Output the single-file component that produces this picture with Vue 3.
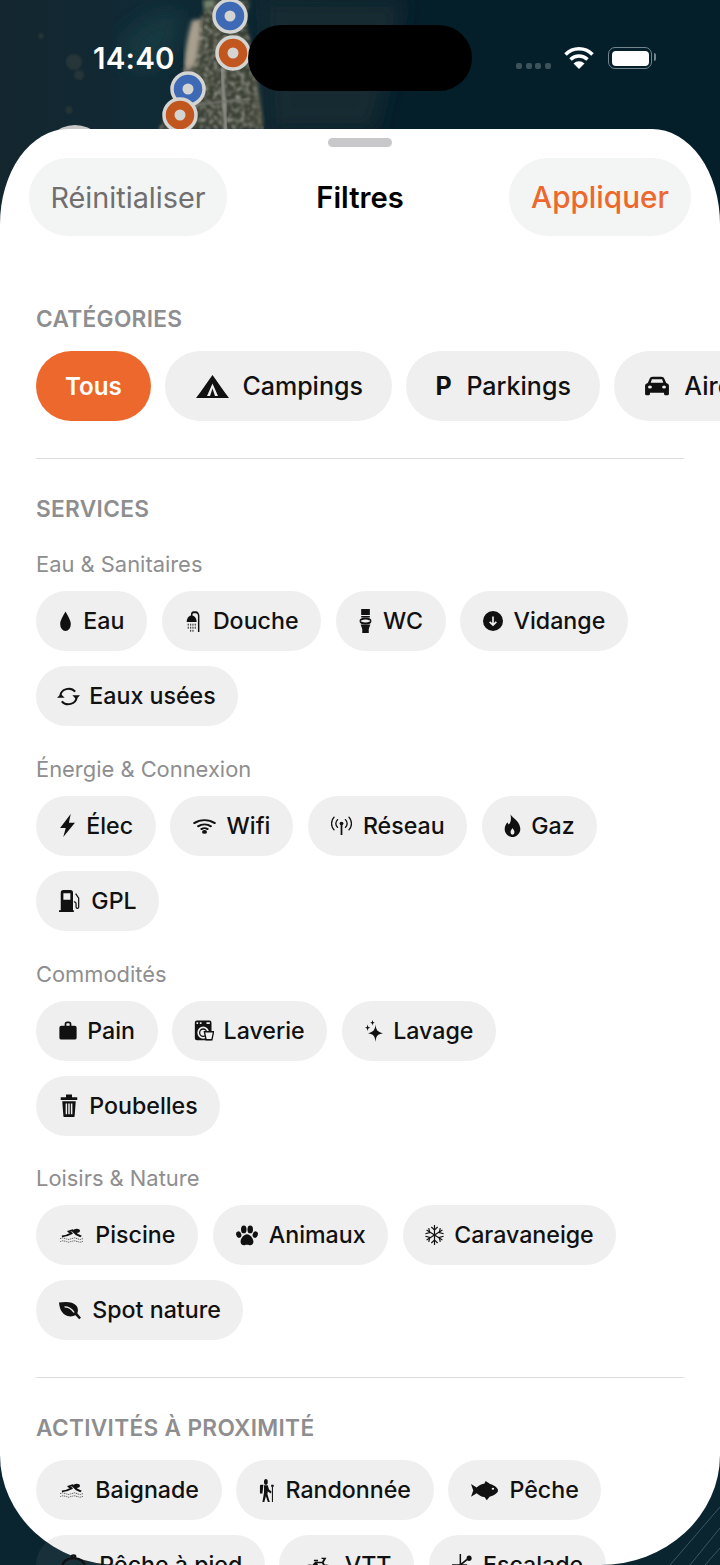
<script setup>
const I = {
  drop: '<path d="M12 1C12 1 3.500 10.500 3.500 15.500a8.500 8.500 0 0 0 17 0C20.500 10.500 12 1 12 1z" fill="currentColor"/>',
  shower: '<path d="M10 7V4.500a3 3 0 0 1 3-3h3.500a4 4 0 0 1 4 4V24" fill="none" stroke="currentColor" stroke-width="2.200"/><path d="M10 5c-4 0-7.500 3-7.500 7.500h15C17.500 8 14 5 10 5z" fill="currentColor"/><g fill="currentColor" opacity=".75"><rect x="4" y="14.500" width="1.800" height="2.200"/><rect x="7.500" y="14.500" width="1.800" height="2.200"/><rect x="11" y="14.500" width="1.800" height="2.200"/><rect x="14.500" y="14.500" width="1.800" height="2.200"/><rect x="4" y="18" width="1.800" height="2.200"/><rect x="7.500" y="18" width="1.800" height="2.200"/><rect x="11" y="18" width="1.800" height="2.200"/><rect x="14.500" y="18" width="1.800" height="2.200"/><rect x="7.500" y="21.500" width="1.800" height="2.200"/><rect x="11" y="21.500" width="1.800" height="2.200"/></g>',
  wc: '<rect x="4" y="0" width="16" height="6" fill="currentColor"/><rect x="4" y="7" width="16" height="1.500" fill="currentColor"/><ellipse cx="12" cy="12" rx="10" ry="2.600" fill="none" stroke="currentColor" stroke-width="2"/><path d="M3 15.500h18l-3 4.500v4H6v-4z" fill="currentColor"/>',
  down: '<circle cx="12" cy="12" r="12" fill="currentColor"/><path d="M12 6.500v10M8 13l4 4 4-4" fill="none" stroke="#efefef" stroke-width="2"/>',
  sync: '<path d="M3.500 11a8.700 8.700 0 0 1 15.500-4.500M20.500 13a8.700 8.700 0 0 1-15.500 4.500" fill="none" stroke="currentColor" stroke-width="2.100"/><path d="M24 10.500h-8l4 4.500zM0 13.500h8L4 9z" fill="currentColor"/>',
  bolt: '<path d="M16.500 0L1.500 14.500h8L6 24 22.500 9H14z" fill="currentColor"/>',
  wifi: '<path d="M1.500 8.500a15.500 15.500 0 0 1 21 0M5.500 13a9.700 9.700 0 0 1 13 0M9 17a4.500 4.500 0 0 1 6 0" fill="none" stroke="currentColor" stroke-width="2.600" stroke-linecap="round"/><circle cx="12" cy="21" r="2.600" fill="currentColor"/>',
  antenna: '<g fill="none" stroke="currentColor" stroke-width="1.500" stroke-linecap="round"><path d="M7.500 4.500a8 8 0 0 0 0 10M3.500 1.500a12.500 12.500 0 0 0 0 16M16.500 4.500a8 8 0 0 1 0 10M20.500 1.500a12.500 12.500 0 0 1 0 16"/><path d="M12 10v14" stroke-width="2"/></g><circle cx="12" cy="9.500" r="2.200" fill="currentColor"/>',
  flame: '<path fill-rule="evenodd" d="M9 0c.5 3 13 6.500 14 15 .5 5-5.500 9-11 9S.5 20.500 1 15c.2-2.500 1.700-4.500 3.800-6.500l1.700 2.500C10 9 10.500 4 9 0zM12 14.500c-1 1.500-2.800 2.500-2.800 4.300a2.800 2.800 0 0 0 5.600 0c0-1.800-1.800-2.800-2.800-4.300z" fill="currentColor"/>',
  fuel: '<path fill-rule="evenodd" d="M2 22V3A3 3 0 0 1 5 0h8a3 3 0 0 1 3 3v19h1v2H0v-2zM5 3.500V10.500h8V3.500z" fill="currentColor"/><path d="M19 4l3.500 5v9.500a1.500 1.500 0 0 1-3 0V15a2 2 0 0 0-2.500-2" fill="none" stroke="currentColor" stroke-width="1.400"/>',
  bag: '<path fill-rule="evenodd" d="M7.500 6V4A3.500 3.500 0 0 1 11 .5h2A3.500 3.500 0 0 1 16.500 4v2H21a2.500 2.500 0 0 1 2.500 2.500V21a2.500 2.500 0 0 1-2.500 2.500H3A2.500 2.500 0 0 1 .5 21V8.500A2.500 2.500 0 0 1 3 6zm2.300 0h4.400V4c0-.7-.5-1.300-1.200-1.300h-2c-.7 0-1.200.6-1.200 1.300z" fill="currentColor"/>',
  washer: '<path fill-rule="evenodd" d="M1 3A2.500 2.500 0 0 1 3.500.5h15A2.500 2.500 0 0 1 21 3v20H3.500A2.500 2.500 0 0 1 1 20.500zM3 2.500h2v2H3zm4 0h2v2H7zm8 0h4v2h-4zM11 7.500a7 7 0 1 0 0 14 7 7 0 0 0 0-14z" fill="currentColor"/><circle cx="11" cy="14.500" r="4.200" fill="none" stroke="currentColor" stroke-width="1.500"/><path d="M12.500 13.500h11l-2 9h-7z" fill="#efefef" stroke="currentColor" stroke-width="1.600"/>',
  sparkle: '<path d="M14 5c.8 6 2.500 8 10 9.500-7.500 1-9.200 3-10 9.500-.8-6.500-2.500-8.500-10-9.500 7.500-1.500 9.200-3.500 10-9.500z" fill="currentColor"/><path d="M10 0l.8 2.200 2.200.8-2.200.8L10 6l-.8-2.200L7 3l2.200-.8zM3.500 5l.9 2.600L7 8.500l-2.600.9L3.500 12l-.9-2.600L0 8.500l2.600-.9z" fill="currentColor"/>',
  trash: '<path fill-rule="evenodd" d="M8 3.500V.5h8v3h7v2.700H1V3.500zM3 7.500h18L19.500 23c0 .5-.5 1-1 1h-13c-.5 0-1-.5-1-1zM7.500 10v11h2v-11zm3.500 0v11h2v-11zm3.500 0v11h2v-11z" fill="currentColor"/>',
  swim: '<circle cx="17.500" cy="4.500" r="3.300" fill="currentColor"/><path d="M2 13.500C6 13 9 11 12 8.500L9 5.500 13 3.500 17.500 10.500 22 13.500" fill="none" stroke="currentColor" stroke-width="2.800" stroke-linejoin="round"/><path d="M0 17c2-1.500 4-1.500 6 0s4 1.500 6 0 4-1.500 6 0 4 1.500 6 0M0 21.500c2-1.300 4-1.300 6 0s4 1.300 6 0 4-1.300 6 0 4 1.300 6 0" fill="none" stroke="currentColor" stroke-width="1.200" stroke-dasharray="1.500 .7" opacity=".75"/>',
  paw: '<ellipse cx="8.500" cy="5" rx="3" ry="4.500" fill="currentColor"/><ellipse cx="15.500" cy="5" rx="3" ry="4.500" fill="currentColor"/><ellipse cx="3" cy="11" rx="2.800" ry="3.800" fill="currentColor" transform="rotate(-15 3 11)"/><ellipse cx="21" cy="11" rx="2.800" ry="3.800" fill="currentColor" transform="rotate(15 21 11)"/><path d="M12 10.500c3.500 0 6.500 4.500 7 8 .4 3-2 5-4.500 4.500-1.500-.4-3.500-.4-5 0C7 23.500 4.600 21.500 5 18.500c.5-3.500 3.500-8 7-8z" fill="currentColor"/>',
  snow: '<g fill="none" stroke="currentColor" stroke-width="1.500"><path d="M12 0v24M2 6l20 12M22 6L2 18"/><path d="M8 2.500L12 6l4-3.500M8 21.500L12 18l4 3.500M.5 10.500L6 9 4.700 3.800M23.500 10.500L18 9l1.300-5.200M.5 13.500L6 15l-1.300 5.200M23.500 13.500L18 15l1.300 5.200"/></g>',
  leaf: '<path d="M0 2c7-1.500 15-1.500 19 4 2 2.800 2 6.500 1 9.500L24 21l-2 2-4-5c-3.500 2-8 2-11.500-.5C2 14 .5 8 0 2z" fill="currentColor"/><path d="M6 7.500c3.500 0 7.500 2 10.500 7" fill="none" stroke="#efefef" stroke-width="1.600"/>',
  hike: '<circle cx="11" cy="3" r="3" fill="currentColor"/><path d="M1.500 7.500a1.500 1.500 0 0 1 1.500-1.500h4l-1.500 9H1.500z" fill="currentColor"/><path d="M8 6.500h6l2 4.500 4 2-1 2-5-2-.5 3 4 8.500h-3l-3.500-6.500L8.500 24h-3L8 14z" fill="currentColor"/><path d="M21.500 8v16" stroke="currentColor" stroke-width="1.700"/><rect x="19.500" y="6" width="4" height="2.200" fill="currentColor"/>',
  fish: '<path d="M0 4.500L5 8.500C7 6 10 4.500 12 4L13 1l4 3.500C21 6 24 9 24 12c0 3-4 6-7.500 7L14 23l-2-3.500c-3-.5-5-2.500-7-4.500l-5 4L2 12z" fill="currentColor"/><circle cx="19.500" cy="10" r="1.100" fill="#efefef"/>',
  basket: '<path d="M12 1.500a1.500 1.500 0 1 1 0 3 1.500 1.500 0 0 1 0-3zM2 14c0-5 4-9.500 10-9.500S22 9 22 14l1.500 9h-23z" fill="none" stroke="currentColor" stroke-width="2.200"/>',
  bike: '<g fill="none" stroke="currentColor" stroke-width="1.700"><circle cx="5" cy="17" r="4.700"/><circle cx="19" cy="17" r="4.700"/><path d="M5 17l5-8h6l3 8M10 9l3 8H5M8.500 6.500H12M15 4h3l-2 5"/></g>',
  climb: '<path d="M10 0v24M0 12h18M10 12l8-6M18 12l4 10" fill="none" stroke="currentColor" stroke-width="1.800"/><circle cx="20.500" cy="4.500" r="3" fill="currentColor"/>',
  tent: '<path fill-rule="evenodd" d="M16.500 0l2.500 3.500L28.500 17l4.500 6H0l4.500-6L14 3.500zM16.500 8.500L11 21h11zM16.500 13.500L19 21h-5z" fill="currentColor"/>',
  car: '<path fill-rule="evenodd" d="M5 4C5.400 2 6.600 1 8 1h8c1.400 0 2.600 1 3 3l1.500 4.500c1.500.5 2.500 1.700 2.500 3.300V22a1 1 0 0 1-1 1h-2.500a1 1 0 0 1-1-1v-2h-13v2a1 1 0 0 1-1 1H2a1 1 0 0 1-1-1V11.800C1 10.200 2 9 3.500 8.500zM7.300 4L6.200 8.200h11.600L16.700 4zM5.500 11.500a1.800 1.800 0 1 0 0 3.600 1.800 1.800 0 0 0 0-3.600zm13 0a1.800 1.800 0 1 0 0 3.600 1.800 1.800 0 0 0 0-3.600z" fill="currentColor"/>'
}

const groups = [
  { title: 'Eau & Sanitaires', chips: [
    { t: 'Eau', i: 'drop', w: 17, iw: 15, ih: 20 },
    { t: 'Douche', i: 'shower', w: 21, iw: 16, ih: 21 },
    { t: 'WC', i: 'wc', w: 17, iw: 13, ih: 24 },
    { t: 'Vidange', i: 'down', w: 23, iw: 20, ih: 20 },
    { t: 'Eaux usées', i: 'sync', w: 23, iw: 24, ih: 21 }
  ] },
  { title: 'Énergie & Connexion', chips: [
    { t: 'Élec', i: 'bolt', w: 20, iw: 17, ih: 23 },
    { t: 'Wifi', i: 'wifi', w: 26, iw: 23, ih: 17 },
    { t: 'Réseau', i: 'antenna', w: 25, iw: 21, ih: 19 },
    { t: 'Gaz', i: 'flame', w: 19, iw: 17, ih: 23 },
    { t: 'GPL', i: 'fuel', w: 25, iw: 21, ih: 22 }
  ] },
  { title: 'Commodités', chips: [
    { t: 'Pain', i: 'bag', w: 21, iw: 18, ih: 19 },
    { t: 'Laverie', i: 'washer', w: 21, iw: 20, ih: 21 },
    { t: 'Lavage', i: 'sparkle', w: 21, iw: 18, ih: 22 },
    { t: 'Poubelles', i: 'trash', w: 23, iw: 18, ih: 23 }
  ] },
  { title: 'Loisirs & Nature', chips: [
    { t: 'Piscine', i: 'swim', w: 29, iw: 23, ih: 15 },
    { t: 'Animaux', i: 'paw', w: 26, iw: 22, ih: 21 },
    { t: 'Caravaneige', i: 'snow', w: 21, iw: 19, ih: 20 },
    { t: 'Spot nature', i: 'leaf', w: 26, iw: 22, ih: 19 }
  ] }
]

const activities = [
  { t: 'Baignade', i: 'swim', w: 29, iw: 23, ih: 15 },
  { t: 'Randonnée', i: 'hike', w: 19, iw: 15, ih: 23 },
  { t: 'Pêche', i: 'fish', w: 31, iw: 27, ih: 21 },
  { t: 'Pêche à pied', i: 'basket', w: 33, iw: 27, ih: 22 },
  { t: 'VTT', i: 'bike', w: 35, iw: 28, ih: 20 },
  { t: 'Escalade', i: 'climb', w: 24, iw: 20, ih: 22 }
]
</script>

<template>
  <div class="phone">
    <svg class="map" width="720" height="240" viewBox="0 0 720 240">
      <defs>
        <filter id="b2"><feGaussianBlur stdDeviation="2" /></filter>
        <filter id="b1"><feGaussianBlur stdDeviation="1" /></filter>
        <filter id="b8"><feGaussianBlur stdDeviation="10" /></filter>
        <filter id="noise" x="0" y="0" width="100%" height="100%">
          <feTurbulence type="fractalNoise" baseFrequency=".22" numOctaves="2" seed="4" />
          <feColorMatrix values="0 0 0 0 .5  0 0 0 0 .49  0 0 0 0 .42  1.800 0 0 0 -.75" />
          <feComposite in2="SourceAlpha" operator="in" />
          <feGaussianBlur stdDeviation=".8" />
        </filter>
        <linearGradient id="sea" x1="0" x2="1" y1="0" y2="0">
          <stop offset="0" stop-color="#14262e" />
          <stop offset=".2" stop-color="#102a36" />
          <stop offset=".56" stop-color="#041e2a" />
          <stop offset="1" stop-color="#051f2a" />
        </linearGradient>
      </defs>
      <rect width="720" height="240" fill="url(#sea)" />
      <path d="M262 0H405L375 130H270z" fill="#162a31" filter="url(#b8)" />
      <path d="M120 40c30-30 50-30 60-30 10 30-20 70-50 60z" fill="#173740" filter="url(#b8)" />
      <g fill="#273537" filter="url(#b1)">
        <circle cx="41" cy="36" r="3" /><circle cx="74" cy="62" r="8" /><circle cx="79" cy="75" r="5" />
        <circle cx="69" cy="110" r="3.500" />
      </g>
      <path d="M212 0h38l-4 20 6 30 4 35 8 45h-106l14-25 8-20 7-30 8-30z" fill="#3a3f36" filter="url(#b2)" />
      <path d="M212 0h38l-4 20 6 30 4 35 8 45h-106l14-25 8-20 7-30 8-30z" filter="url(#noise)" />
      <path d="M192 20c-4 15-8 30-7 50l10-4c4-18 6-32 6-46z" fill="#a89f8e" filter="url(#b2)" />
      <path d="M203 0h14l-12 12z" fill="#7c8a70" filter="url(#b2)" />
      <path d="M252 70l6 55h5l-5-50z" fill="#6f6a59" opacity=".6" filter="url(#b2)" />
      <path d="M222 68l4 66" fill="none" stroke="#8d8d88" stroke-width="3.500" filter="url(#b1)" />
      <path d="M196 105l24-3 30-3" fill="none" stroke="#77776f" stroke-width="2.200" filter="url(#b1)" />
      <circle cx="75" cy="158" r="33" fill="#c7c7c5" />
      <g stroke="#d4d4d2" stroke-width="3.500">
        <circle cx="230" cy="16" r="16" fill="#3e69b5" />
        <circle cx="233" cy="53" r="16" fill="#c2561f" />
        <circle cx="188" cy="89" r="16" fill="#3e69b5" />
        <circle cx="180" cy="115" r="16" fill="#c2561f" />
      </g>
      <g fill="#d4d4d2">
        <circle cx="230" cy="16" r="5.500" /><circle cx="233" cy="53" r="5.500" />
        <circle cx="188" cy="89" r="5.500" /><circle cx="180" cy="115" r="5.500" />
      </g>
    </svg>

    <div class="corner">
      <svg width="720" height="125" viewBox="0 0 720 125" fill="none" stroke="#3a5666" stroke-width="1">
        <path d="M670 125L720 67M690 125L720 88M705 125L720 108" />
      </svg>
    </div>

    <header class="status">
      <span class="time">14:40</span>
      <div class="island"></div>
      <div class="status-right">
        <span class="dots"><i></i><i></i><i></i><i></i></span>
        <svg width="30" height="22" viewBox="0 0 30 22">
          <path d="M1.500 7.500a19 19 0 0 1 27 0M6.500 12.500a12 12 0 0 1 17 0" fill="none" stroke="#fff" stroke-width="3.500" />
          <path d="M15 22l-5.500-5.500a8 8 0 0 1 11 0z" fill="#fff" />
        </svg>
        <span class="battery"><b></b></span>
      </div>
    </header>

    <main class="sheet">
      <div class="handle"></div>
      <div class="topbar">
        <button class="tb reset">Réinitialiser</button>
        <h1>Filtres</h1>
        <button class="tb apply">Appliquer</button>
      </div>

      <section class="block cats">
        <h2>CATÉGORIES</h2>
        <div class="cat-row">
          <span class="cat active">Tous</span>
          <span class="cat"><svg class="tent" width="33" height="23" viewBox="0 0 33 23" v-html="I.tent"></svg>Campings</span>
          <span class="cat"><span class="pk">P</span>Parkings</span>
          <span class="cat"><span class="carbox"><svg width="26" height="20" viewBox="0 0 24 24" preserveAspectRatio="none" v-html="I.car"></svg></span>Aires</span>
        </div>
      </section>

      <hr />

      <section class="block services">
        <h2>SERVICES</h2>
        <div v-for="g in groups" :key="g.title" class="group">
          <h3>{{ g.title }}</h3>
          <div class="chips">
            <span v-for="c in g.chips" :key="c.t" class="chip">
              <span class="ibox" :style="{ width: c.w + 'px' }">
                <svg :width="c.iw" :height="c.ih" viewBox="0 0 24 24" preserveAspectRatio="none" v-html="I[c.i]"></svg>
              </span>
              {{ c.t }}
            </span>
          </div>
        </div>
      </section>

      <hr class="second" />

      <section class="block activities">
        <h2>ACTIVITÉS À PROXIMITÉ</h2>
        <div class="chips">
          <span v-for="c in activities" :key="c.t" class="chip">
            <span class="ibox" :style="{ width: c.w + 'px' }">
              <svg :width="c.iw" :height="c.ih" viewBox="0 0 24 24" preserveAspectRatio="none" v-html="I[c.i]"></svg>
            </span>
            {{ c.t }}
          </span>
        </div>
      </section>
    </main>
  </div>
</template>

<style>
html, body { margin: 0; background: #0a2530; }
</style>

<style scoped>
.phone {
  position: relative;
  width: 720px;
  height: 1565px;
  overflow: hidden;
  background: #0a2530;
  font-family: Inter, "Liberation Sans", sans-serif;
  color: #111;
}
.map { position: absolute; left: 0; top: 0; }
.corner { position: absolute; left: 0; bottom: 0; }
.corner svg { display: block; }

.status {
  position: relative;
  height: 129px;
  display: flex;
  align-items: flex-start;
  box-sizing: border-box;
  padding: 25px 64px 0 93px;
  color: #fff;
}
.time { font-size: 29.500px; font-weight: 600; line-height: 66px; width: 155px; letter-spacing: .2px; }
.island { width: 224px; height: 66px; border-radius: 33px; background: #000; }
.status-right { margin-left: auto; display: flex; align-items: center; gap: 14px; height: 66px; }
.dots { display: flex; gap: 3.600px; margin-right: -1px; margin-top: 16px; }
.dots i { width: 6px; height: 6px; border-radius: 2px; background: #3d5259; }
.battery {
  width: 44px; height: 22px; box-sizing: border-box; padding: 2.500px;
  border: 1.500px solid #75858d; border-radius: 7px; position: relative; display: block;
  margin-right: 4px;
}
.battery b { display: block; height: 100%; background: #fff; border-radius: 4px; }
.battery::after {
  content: ""; position: absolute; right: -5px; top: 5px; width: 2px; height: 8px;
  background: #75858d; border-radius: 0 2px 2px 0;
}

.sheet {
  position: relative;
  height: 1436px;
  box-sizing: border-box;
  background: #fff;
  border-radius: 68px 68px 120px 120px / 95px 95px 110px 110px;
  padding: 9px 36px 0;
}
.handle { width: 64px; height: 9px; border-radius: 5px; background: #c8c8ca; margin: 0 auto 11px; }
.topbar { display: grid; grid-template-columns: 1fr auto 1fr; align-items: center; margin: 0 -7px; height: 78px; }
.tb {
  height: 78px; border: 0; border-radius: 39px; background: #f3f4f4;
  font: 400 28.800px Inter, "Liberation Sans", sans-serif; padding: 0;
}
.reset { color: #6f6f6f; width: 198px; justify-self: start; }
.apply { color: #ec682c; width: 182px; font-weight: 500; font-size: 29.700px; justify-self: end; }
.topbar h1 { margin: 0; font-size: 29.200px; font-weight: 600; color: #000; }

h2 { margin: 0; font-size: 22.700px; line-height: 28px; font-weight: 600; color: #8e8e90; letter-spacing: .3px; }
h3 { margin: 0; font-size: 21.900px; line-height: 26px; font-weight: 400; color: #8e8e90; }
hr { border: 0; height: 1px; background: #dcdcdc; margin: 0; }

.cats { padding-top: 69px; }
.cat-row { display: flex; gap: 14.500px; margin-top: 18px; width: 720px; height: 70px; margin-bottom: 37px; }
.cat {
  height: 70px; flex: none; border-radius: 35px; background: #efefef; box-sizing: border-box;
  display: flex; align-items: center; gap: 13px; padding: 0 29px; font-size: 25px; font-weight: 500;
}
.cat .tent { flex: none; margin: 0 .5px 0 1.500px; }
.carbox { width: 28px; display: flex; justify-content: center; flex: none; }
.carbox svg { display: block; }
.cat.active { background: #ec682c; color: #fff; font-weight: 600; font-size: 24.200px; padding: 0 29px 0 29px; }
.pk { font-size: 25px; font-weight: 700; width: 18px; flex: none; }

.services { padding-top: 36px; }
.group h3 { margin-bottom: 14px; }
.group { margin-top: 29.670px; }
.services h2 + .group { margin-top: 28.300px; }
.chips { display: flex; flex-wrap: wrap; gap: 15px 14.500px; }
.chip {
  height: 60px; flex: none; border-radius: 30px; background: rgba(128, 128, 128, .125);
  box-sizing: border-box; display: flex; align-items: center; gap: 9px; padding: 0 22.700px 0 21.300px;
  font-size: 23.200px; font-weight: 500; white-space: nowrap;
}
.ibox { display: flex; justify-content: center; align-items: center; flex: none; color: #111; }
.ibox svg { display: block; }

.second { margin-top: 37px; }
.activities { padding-top: 36px; }
.activities .chips { margin-top: 18px; }
</style>
